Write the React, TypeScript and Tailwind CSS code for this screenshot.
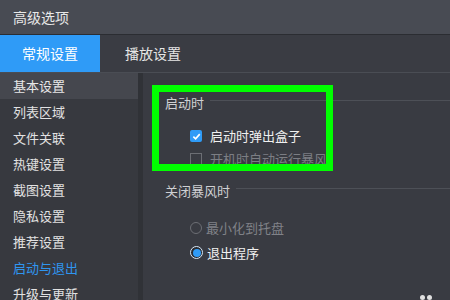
import React from 'react';

const sideItems = ['基本设置', '列表区域', '文件关联', '热键设置', '截图设置', '隐私设置', '推荐设置', '启动与退出', '升级与更新'];

const GroupHeader = ({ text }: { text: string }) => (
  <div className="flex items-center h-[18px] pl-[22px]">
    <span className="text-[13px] text-[#cfd0d3] leading-none">{text}</span>
    <div className="flex-1 h-px bg-[#4d5057] ml-[6px] -mt-[3px]" />
  </div>
);

const Check = ({ checked }: { checked: boolean }) =>
  checked ? (
    <span className="w-[12px] h-[12px] rounded-[2px] bg-[#2f9bf7] flex items-center justify-center">
      <svg width="9" height="9" viewBox="0 0 10 10">
        <path d="M1.5 5.2 L4 7.6 L8.6 2.4" fill="none" stroke="#fff" strokeWidth="1.8" />
      </svg>
    </span>
  ) : (
    <span className="w-[12px] h-[12px] border border-[#6c6e74]" />
  );

const Radio = ({ on }: { on: boolean }) =>
  on ? (
    <span className="w-[13px] h-[13px] rounded-full border border-[#d8e8f8] bg-[#2a2c31] flex items-center justify-center">
      <span className="w-[8px] h-[8px] rounded-full bg-[#2f9bf7]" />
    </span>
  ) : (
    <span className="w-[12px] h-[12px] rounded-full border border-[#6c6e74]" />
  );

export default function App() {
  return (
    <div
      className="relative w-[450px] h-[300px] overflow-hidden bg-[#393b42] flex flex-col"
      style={{ fontFamily: '"Noto Sans CJK SC", "Noto Sans", sans-serif' }}
    >
      {/* title */}
      <div className="h-[35px] shrink-0 bg-[#484b53] border-b border-[#2b2d32] flex items-center pl-[13px] text-[14px] text-[#e8e8e8]">
        高级选项
      </div>

      {/* tabs */}
      <div className="h-[38px] shrink-0 bg-[#3a3c43] border-b border-[#4a4d54] flex text-[14px]">
        <div className="w-[100px] bg-[#2f9bf7] text-white flex items-center justify-center">常规设置</div>
        <div className="w-[106px] text-[#e6e6e6] flex items-center justify-center">播放设置</div>
      </div>

      <div className="flex-1 flex min-h-0">
        {/* sidebar */}
        <div className="w-[138px] shrink-0 bg-[#37393f] flex flex-col">
          {sideItems.map((s, i) => (
            <div
              key={s}
              className={`h-[26px] shrink-0 pl-[13px] flex items-center text-[13px] ${
                i === 0 ? 'bg-[#45474e] text-[#e8e8e8]' : i === 7 ? 'text-[#2f96f0]' : 'text-[#e2e2e2]'
              }`}
            >
              {s}
            </div>
          ))}
        </div>
        <div className="w-[5px] shrink-0 bg-[#303237]" />

        {/* content */}
        <div className="flex-1 flex flex-col pt-[20px]">
          <GroupHeader text="启动时" />
          <div className="flex flex-col pl-[47px] mt-[19px] gap-[11px]">
            <div className="flex items-center h-[12px]">
              <Check checked />
              <span className="ml-[8px] text-[13px] text-[#f0f0f0]">启动时弹出盒子</span>
            </div>
            <div className="flex items-center h-[12px]">
              <Check checked={false} />
              <span className="ml-[8px] text-[13px] text-[#7c7e84] whitespace-nowrap">开机时自动运行暴风</span>
            </div>
          </div>

          <div className="mt-[16px]">
            <GroupHeader text="关闭暴风时" />
          </div>
          <div className="flex flex-col pl-[47px] mt-[22px] gap-[12px]">
            <div className="flex items-center h-[13px]">
              <Radio on={false} />
              <span className="ml-[4px] text-[13px] text-[#808288]">最小化到托盘</span>
            </div>
            <div className="flex items-center h-[13px]">
              <Radio on />
              <span className="ml-[4px] text-[13px] text-[#f0f0f0]">退出程序</span>
            </div>
          </div>
        </div>
      </div>

      {/* annotation */}
      <div className="absolute left-[152px] top-[85px] w-[181px] h-[86px] border-[7px] border-[#00ff00]" />
      <div className="absolute left-[420px] top-[295px] flex gap-[2px]">
        <span className="w-[5px] h-[5px] rounded-full bg-[#e0e0e0]" />
        <span className="w-[5px] h-[5px] rounded-full bg-[#e0e0e0]" />
      </div>
    </div>
  );
}
